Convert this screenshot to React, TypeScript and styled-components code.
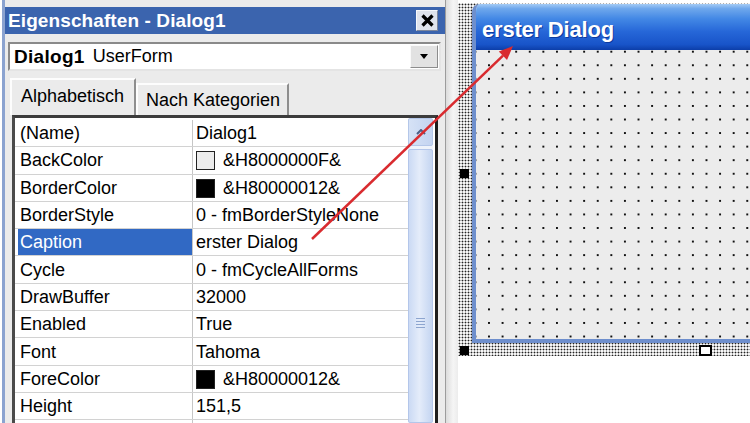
import React from 'react'
import styled, { createGlobalStyle } from 'styled-components'

const GlobalStyle = createGlobalStyle`
  html, body {
    margin: 0;
    padding: 0;
    background: #fff;
  }
  body {
    font-family: 'Liberation Sans', Arial, sans-serif;
  }
`

interface PropertyRow {
  name: string
  value: string
  swatch?: string
  selected?: boolean
}

const PROPERTIES: PropertyRow[] = [
  { name: '(Name)', value: 'Dialog1' },
  { name: 'BackColor', value: '&H8000000F&', swatch: '#ececec' },
  { name: 'BorderColor', value: '&H80000012&', swatch: '#000' },
  { name: 'BorderStyle', value: '0 - fmBorderStyleNone' },
  { name: 'Caption', value: 'erster Dialog', selected: true },
  { name: 'Cycle', value: '0 - fmCycleAllForms' },
  { name: 'DrawBuffer', value: '32000' },
  { name: 'Enabled', value: 'True' },
  { name: 'Font', value: 'Tahoma' },
  { name: 'ForeColor', value: '&H80000012&', swatch: '#000' },
  { name: 'Height', value: '151,5' },
  { name: '', value: '' },
]

const App: React.FC = () => {
  return (
    <>
      <GlobalStyle />
      <Screen>
        <PropertiesWindow>
          <TitleBar>
            <TitleText>Eigenschaften - Dialog1</TitleText>
            <CloseButton>
              <svg width='13' height='13' viewBox='0 0 13 13'>
                <path d='M1.5 1.5 L11.5 11.5 M11.5 1.5 L1.5 11.5' stroke='#000' strokeWidth='3.2' />
              </svg>
            </CloseButton>
          </TitleBar>
          <ObjectSelect>
            <ObjectName>Dialog1</ObjectName>
            <ObjectType>UserForm</ObjectType>
            <DropButton>
              <svg width='8' height='5' viewBox='0 0 8 5'>
                <path d='M0 0 H8 L4 5 Z' fill='#000' />
              </svg>
            </DropButton>
          </ObjectSelect>
          <TabStrip>
            <Tab $active>Alphabetisch</Tab>
            <Tab>Nach Kategorien</Tab>
          </TabStrip>
          <GridFrame>
            <Grid>
              {PROPERTIES.map((p, i) => (
                <Row key={i}>
                  <NameCell $selected={p.selected}>{p.name}</NameCell>
                  <ValueCell>
                    {p.swatch && <Swatch $color={p.swatch} />}
                    {p.value}
                  </ValueCell>
                </Row>
              ))}
            </Grid>
            <ScrollBar>
              <ScrollButton>
                <svg width='10' height='6' viewBox='0 0 10 6'>
                  <path d='M1 5 L5 1 L9 5' stroke='#4a5f86' strokeWidth='2' fill='none' />
                </svg>
              </ScrollButton>
              <ScrollThumb>
                <Grip>
                  <GripLine />
                  <GripLine />
                  <GripLine />
                  <GripLine />
                </Grip>
              </ScrollThumb>
            </ScrollBar>
          </GridFrame>
        </PropertiesWindow>
        <Splitter />
        <Designer>
          <SelectionFrame>
            <UserForm>
              <FormCaption>erster Dialog</FormCaption>
              <FormBody />
            </UserForm>
            <Handle $kind='inactive' $left={2} $top={166} />
            <Handle $kind='inactive' $left={2} $top={343} />
            <Handle $kind='active' $left={241} $top={342} />
          </SelectionFrame>
        </Designer>
        <ArrowOverlay width='750' height='423' viewBox='0 0 750 423'>
          <line x1='312' y1='239' x2='503' y2='55.7' stroke='#d92b2f' strokeWidth='2.5' />
          <polygon points='513,46 507,60 498.8,51.4' fill='#d92b2f' />
        </ArrowOverlay>
      </Screen>
    </>
  )
}

const Screen = styled.div`
  position: relative;
  width: 750px;
  height: 423px;
  display: flex;
  overflow: hidden;
  background: #fff;
  color: #000;
  font-size: 18px;
`

const PropertiesWindow = styled.div`
  flex-shrink: 0;
  width: 440px;
  margin-left: 2px;
  border-left: 3px solid #8ba3d0;
  padding-top: 7px;
  background: #ebebeb;
  display: flex;
  flex-direction: column;
`

const TitleBar = styled.div`
  height: 27px;
  flex-shrink: 0;
  display: flex;
  align-items: center;
  padding-left: 3px;
  background: #3b64ae;
`

const TitleText = styled.span`
  color: #fff;
  font-weight: 700;
  font-size: 19px;
  letter-spacing: 0.1px;
`

const CloseButton = styled.div`
  margin-left: auto;
  margin-right: 7px;
  width: 22px;
  height: 21px;
  box-sizing: border-box;
  display: flex;
  align-items: center;
  justify-content: center;
  background: #dfe3ec;
  border: 1px solid;
  border-color: #f6f8fc #7d879c #7d879c #f6f8fc;
`

const ObjectSelect = styled.div`
  margin: 8px 4px 0 3px;
  height: 29px;
  box-sizing: border-box;
  display: flex;
  align-items: center;
  padding-left: 4px;
  background: #fff;
  border: 2px solid;
  border-color: #8a8a8a #e4e4e4 #e4e4e4 #8a8a8a;
`

const ObjectName = styled.span`
  font-weight: 700;
  font-size: 19px;
  letter-spacing: 0.3px;
`

const ObjectType = styled.span`
  margin-left: 8px;
  font-size: 18px;
`

const DropButton = styled.div`
  margin-left: auto;
  margin-right: 1px;
  width: 28px;
  height: 23px;
  box-sizing: border-box;
  display: flex;
  align-items: center;
  justify-content: center;
  background: #e2e2e2;
  border: 1px solid;
  border-color: #fafafa #8c8c8c #8c8c8c #fafafa;
`

const TabStrip = styled.div`
  margin-top: 7px;
  height: 37px;
  flex-shrink: 0;
  display: flex;
  align-items: flex-end;
  padding-left: 5px;
`

const Tab = styled.div<{ $active?: boolean }>`
  box-sizing: border-box;
  height: ${(p) => (p.$active ? 37 : 32)}px;
  width: ${(p) => (p.$active ? 126 : 153)}px;
  display: flex;
  align-items: center;
  padding-left: ${(p) => (p.$active ? 9 : 8)}px;
  padding-bottom: ${(p) => (p.$active ? 3 : 0)}px;
  font-size: 18px;
  background: #ebebeb;
  border-top: 2px solid #fdfdfd;
  border-left: 2px solid #fdfdfd;
  border-right: 2px solid #8e8e8e;
`

const GridFrame = styled.div`
  flex: 1;
  min-height: 0;
  margin: 0 7px 0 7px;
  display: flex;
  overflow: hidden;
  background: #fff;
  border: 3px solid;
  border-color: #3c3c3c #1e1e1e #1e1e1e #4a4a4a;
  border-bottom: none;
  padding-right: 2px;
`

const Grid = styled.div`
  flex: 1;
  padding-top: 2px;
  display: flex;
  flex-direction: column;
`

const Row = styled.div`
  flex-shrink: 0;
  height: 27.3px;
  box-sizing: border-box;
  display: flex;
  border-bottom: 1px solid #d2d2d2;
`

const NameCell = styled.div<{ $selected?: boolean }>`
  width: 175px;
  margin-left: 3px;
  box-sizing: border-box;
  padding-left: 2px;
  padding-top: 1px;
  display: flex;
  align-items: center;
  border-right: 1px solid #c6c6c6;
  background: ${(p) => (p.$selected ? '#3169c4' : '#fff')};
  color: ${(p) => (p.$selected ? '#fff' : '#000')};
`

const ValueCell = styled.div`
  flex: 1;
  padding-left: 3px;
  padding-top: 1px;
  display: flex;
  align-items: center;
  white-space: nowrap;
`

const Swatch = styled.span<{ $color: string }>`
  width: 19px;
  height: 19px;
  box-sizing: border-box;
  margin-right: 8px;
  background: ${(p) => p.$color};
  border: 1.5px solid #222;
`

const ScrollBar = styled.div`
  width: 25px;
  display: flex;
  flex-direction: column;
  background: #eef3fb;
`

const ScrollButton = styled.div`
  height: 28px;
  box-sizing: border-box;
  display: flex;
  align-items: center;
  justify-content: center;
  background: linear-gradient(90deg, #d6e2f6, #c3d4f1);
  border: 1px solid #b4c7e9;
  border-radius: 2px;
`

const ScrollThumb = styled.div`
  flex: 1;
  margin-top: 3px;
  display: flex;
  flex-direction: column;
  align-items: center;
  padding-top: 168px;
  background: linear-gradient(90deg, #cbdaf4, #e4ecfa 45%, #c4d5f1);
  border: 1px solid #b3c6ea;
  border-radius: 2px;
`

const Grip = styled.div`
  display: flex;
  flex-direction: column;
  gap: 2px;
`

const GripLine = styled.div`
  width: 9px;
  height: 1px;
  background: #8da5cf;
`

const Splitter = styled.div`
  flex-shrink: 0;
  width: 12px;
  border-left: 1px solid #9c9c9c;
  background: linear-gradient(90deg, #dcdcdc, #f5f5f5 60%, #ececec);
`

const Designer = styled.div`
  flex: 1;
  min-width: 0;
  padding-top: 3px;
  overflow: hidden;
  background: #fff;
`

const SelectionFrame = styled.div`
  position: relative;
  width: 495px;
  height: 353px;
  box-sizing: border-box;
  padding: 1px 0 13px 14px;
  display: flex;
  background: radial-gradient(circle, #222 0.8px, transparent 1.1px) 0 0 / 3px 3px, #f6f6f6;
`

const UserForm = styled.div`
  flex: 1;
  display: flex;
  flex-direction: column;
  overflow: hidden;
  border-left: 4px solid #6e8fcd;
  border-bottom: 4px solid #6e8fcd;
  border-top-left-radius: 8px;
  background: #ececec;
`

const FormCaption = styled.div`
  height: 46px;
  flex-shrink: 0;
  box-sizing: border-box;
  padding: 15px 0 0 6px;
  color: #fff;
  font-weight: 700;
  font-size: 22px;
  line-height: 22px;
  letter-spacing: -0.2px;
  text-shadow: 1px 1px 0 #0d3b9e;
  background: linear-gradient(
    180deg,
    #a4cbf5 0,
    #6fa8ec 10%,
    #4388e5 32%,
    #2667d8 60%,
    #1854c9 88%,
    #0c3ea9 100%
  );
`

const FormBody = styled.div`
  flex: 1;
  background: radial-gradient(circle, #111 1px, transparent 1.4px) 6.2px -5.1px / 13.6px
      13.57px,
    #ececec;
`

const Handle = styled.div<{ $kind: 'active' | 'inactive'; $left: number; $top: number }>`
  position: absolute;
  left: ${(p) => p.$left}px;
  top: ${(p) => p.$top}px;
  box-sizing: border-box;
  width: ${(p) => (p.$kind === 'active' ? 13 : 9)}px;
  height: ${(p) => (p.$kind === 'active' ? 11 : 9)}px;
  background: ${(p) => (p.$kind === 'active' ? '#fff' : '#000')};
  border: 2px solid #000;
`

const ArrowOverlay = styled.svg`
  position: absolute;
  left: 0;
  top: 0;
  pointer-events: none;
`

export default App
